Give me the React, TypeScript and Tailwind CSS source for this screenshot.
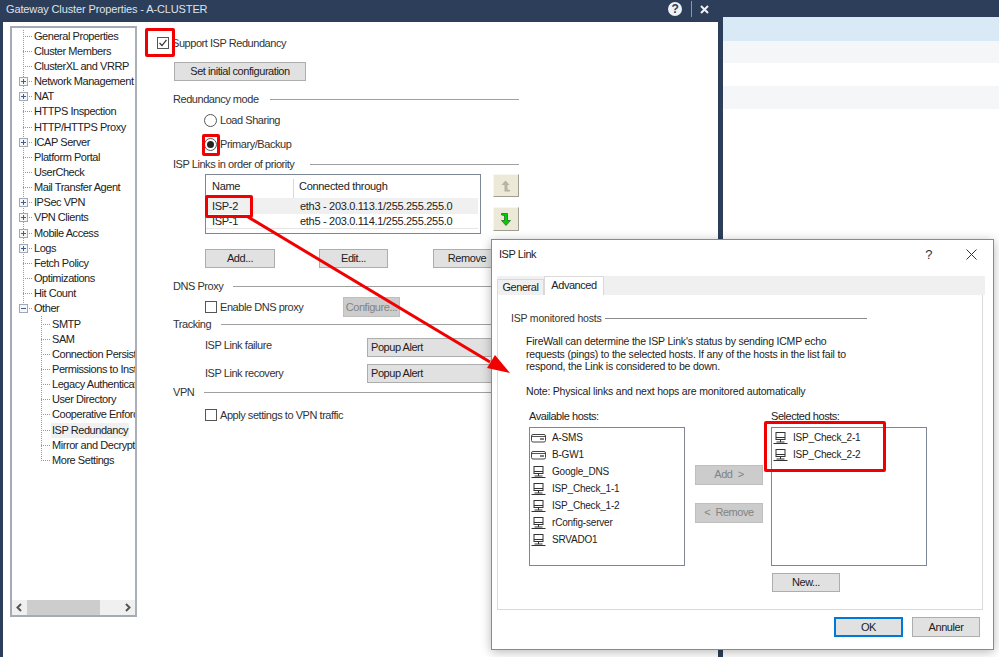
import React from "react";

const treeRows: [string, number, "" | "+" | "-"][] = [
  ["General Properties", 0, ""], ["Cluster Members", 0, ""], ["ClusterXL and VRRP", 0, ""],
  ["Network Management", 0, "+"], ["NAT", 0, "+"], ["HTTPS Inspection", 0, ""],
  ["HTTP/HTTPS Proxy", 0, ""], ["ICAP Server", 0, "+"], ["Platform Portal", 0, ""],
  ["UserCheck", 0, ""], ["Mail Transfer Agent", 0, ""], ["IPSec VPN", 0, "+"],
  ["VPN Clients", 0, "+"], ["Mobile Access", 0, "+"], ["Logs", 0, "+"],
  ["Fetch Policy", 0, ""], ["Optimizations", 0, ""], ["Hit Count", 0, ""], ["Other", 0, "-"],
  ["SMTP", 1, ""], ["SAM", 1, ""], ["Connection Persistence", 1, ""], ["Permissions to Install", 1, ""],
  ["Legacy Authentication", 1, ""], ["User Directory", 1, ""], ["Cooperative Enforcement", 1, ""],
  ["ISP Redundancy", 1, ""], ["Mirror and Decrypt", 1, ""], ["More Settings", 1, ""],
];

function Expander({ kind }: { kind: "+" | "-" }) {
  return (
    <svg width="9" height="9" viewBox="0 0 9 9" className="absolute left-[-4px] top-[3px] bg-[#f4f6f8]">
      <rect x="0.5" y="0.5" width="8" height="8" fill="none" stroke="#a2a9b3" />
      <path d={kind === "+" ? "M2 4.5H7M4.5 2V7" : "M2 4.5H7"} stroke="#3d5f96" fill="none" />
    </svg>
  );
}

function TreeRow({ label, level, exp }: { label: string; level: number; exp: "" | "+" | "-" }) {
  const selected = label === "ISP Redundancy";
  return (
    <div className={`relative h-[15.17px] flex items-center whitespace-nowrap ${level === 0 ? "ml-[23px]" : "ml-[41px]"}`}>
      <span className="w-[9px] shrink-0 border-t border-dotted border-[#9a9a9a]" />
      {exp && <Expander kind={exp} />}
      <span className={`${level === 0 ? "ml-[2px]" : "ml-[1px] pl-[1px] pr-[1px]"} ${selected ? "bg-[#f0f0f0] w-[80px] py-[2px]" : ""}`}>{label}</span>
    </div>
  );
}

function Tree() {
  return (
    <div className="relative mt-1 ml-[7px] w-[127px] h-[591px] shrink-0 border-2 border-[#a4abb5] border-r-[#aab0ba] bg-white text-[#222] overflow-hidden flex flex-col">
      <div className="relative pt-[0.5px] flex-1 overflow-hidden">
        <span className="absolute left-[11px] top-[2px] h-[279px] border-l border-dotted border-[#9a9a9a]" />
        <span className="absolute left-[29px] top-[288px] h-[145px] border-l border-dotted border-[#9a9a9a]" />
        <div className="relative -translate-x-[12px]">
          {treeRows.map(([l, lv, e]) => <TreeRow key={l} label={l} level={lv} exp={e} />)}
        </div>
      </div>
      <div className="h-[15px] flex items-center bg-[#f0f0f0]">
        <svg width="15" height="15" viewBox="0 0 15 15" className="shrink-0"><path d="M9 4L5.5 7.5L9 11" fill="none" stroke="#555" strokeWidth="2" /></svg>
        <div className="w-[73px] h-[15px] bg-[#cdcdcd]" />
        <div className="flex-1" />
        <svg width="15" height="15" viewBox="0 0 15 15" className="shrink-0"><path d="M6 4L9.5 7.5L6 11" fill="none" stroke="#555" strokeWidth="2" /></svg>
      </div>
    </div>
  );
}

function Btn({ children, cls = "", disabled = false }: { children?: React.ReactNode; cls?: string; disabled?: boolean }) {
  return (
    <div className={`flex items-center justify-center border shrink-0 ${disabled ? "bg-[#cccccc] border-[#bfbfbf] text-[#838383]" : "bg-[#e1e1e1] border-[#adadad] text-[#222]"} ${cls}`}>{children}</div>
  );
}

function Header({ text, cls = "", gap = "gap-[10px]" }: { text: string; cls?: string; gap?: string }) {
  return (
    <div className={`flex items-center h-[14px] text-[#333] ${gap} ${cls}`}>
      <span className="whitespace-nowrap">{text}</span>
      <span className="flex-1 border-t border-[#a0a0a0]" />
    </div>
  );
}

function Check({ checked = false }: { checked?: boolean }) {
  return (
    <svg width="12" height="12" viewBox="0 0 12 12" className="shrink-0">
      <rect x="0.5" y="0.5" width="11" height="11" fill="#fff" stroke="#555" />
      {checked && <path d="M2.5 6L5 8.5L9.5 2.8" fill="none" stroke="#333" strokeWidth="1.2" />}
    </svg>
  );
}

function Radio({ on = false }: { on?: boolean }) {
  return (
    <svg width="13" height="13" viewBox="0 0 13 13" className="shrink-0">
      <circle cx="6.5" cy="6.5" r="6" fill="#fff" stroke="#555" />
      {on && <circle cx="6.5" cy="6.5" r="3.5" fill="#222" />}
    </svg>
  );
}

function ArrowBtn({ dir }: { dir: "up" | "down" }) {
  return (
    <div className={`w-[26px] flex items-center justify-center bg-[#ece9d8] border border-r-[#9d9d92] border-b-[#9d9d92] border-t-[#f7f6ef] border-l-[#f7f6ef] ${dir === "up" ? "h-[23px]" : "h-[24px]"}`}>
      {dir === "up" ? (
        <svg width="10" height="12" viewBox="0 0 10 12"><path d="M4.5 0.5L8.5 5H6.5V9.5L9 10V11.5H3.5V5H0.5Z" fill="#b5b3a2" /></svg>
      ) : (
        <svg width="10" height="13" viewBox="0 0 10 13"><path d="M0.5 0.5H6.5V7.5H9.5L5 12.5L0.5 7.5H3.5V2.5L0.5 2Z" fill="#00d000" stroke="#235a23" strokeWidth="0.7" /></svg>
      )}
    </div>
  );
}

function SelectBox({ cls = "" }: { cls?: string }) {
  return (
    <div className={`w-[150px] h-[19px] bg-[#e1e1e1] border border-[#adadad] flex items-center pl-[3px] shrink-0 text-[#222] ${cls}`}>Popup Alert</div>
  );
}

function Form() {
  return (
    <div className="ml-[36px] w-[346px] flex flex-col text-[#333]">
      <div className="mt-[14px] -ml-[16px] h-[14px] flex items-center gap-[3px]"><Check checked /><span>Support ISP Redundancy</span></div>
      <Btn cls="mt-[12px] ml-[1px] w-[132px] h-[19px]">Set initial configuration</Btn>
      <Header text="Redundancy mode" cls="mt-[11px]" gap="gap-[11px]" />
      <div className="mt-[7px] ml-[31px] h-[14px] flex items-center gap-[3px]"><Radio /><span>Load Sharing</span></div>
      <div className="mt-[10px] ml-[31px] h-[14px] flex items-center gap-[3px]"><Radio on /><span>Primary/Backup</span></div>
      <Header text="ISP Links in order of priority" cls="mt-[6px]" gap="gap-[16px]" />
      <div className="mt-[3px] ml-[32px] flex gap-[12px] items-start">
        <div className="w-[277px] h-[60px] border border-[#7d8694] flex flex-col text-[#222] pt-[4px] tracking-[-0.3px]">
          <div className="h-[19px] flex items-start"><span className="w-[88px] pl-[6px] border-r border-[#d9d9d9] h-[19px] pt-[2px]">Name</span><span className="pl-[5px] pt-[2px]">Connected through</span></div>
          <div className="h-[16px] flex items-center bg-[#f0f0f0] mr-[2px]"><span className="w-[88px] pl-[6px]">ISP-2</span><span className="pl-[6px]">eth3 - 203.0.113.1/255.255.255.0</span></div>
          <div className="h-[15px] flex items-center border-b border-[#e5e5e5] mr-[2px]"><span className="w-[88px] pl-[6px]">ISP-1</span><span className="pl-[6px]">eth5 - 203.0.114.1/255.255.255.0</span></div>
        </div>
        <div className="flex flex-col gap-[10px]"><ArrowBtn dir="up" /><ArrowBtn dir="down" /></div>
      </div>
      <div className="mt-[15px] ml-[32px] flex h-[19px]">
        <Btn cls="w-[70px] h-[19px]">Add...</Btn>
        <Btn cls="ml-[44px] w-[69px] h-[19px]">Edit...</Btn>
        <Btn cls="ml-[45px] w-[68px] h-[19px]">Remove</Btn>
      </div>
      <Header text="DNS Proxy" cls="mt-[11px]" />
      <div className="mt-[4px] ml-[32px] h-[20px] flex items-center">
        <div className="w-[138px] flex items-center gap-[3px]"><Check /><span>Enable DNS proxy</span></div>
        <Btn disabled cls="w-[57px] h-[20px]">Configure...</Btn>
      </div>
      <Header text="Tracking" />
      <div className="mt-[7px] ml-[32px] flex"><span className="w-[162px] h-[14px] leading-[14px]">ISP Link failure</span><SelectBox /></div>
      <div className="mt-[7px] ml-[32px] flex items-center"><span className="w-[162px]">ISP Link recovery</span><SelectBox /></div>
      <Header text="VPN" cls="mt-[2px]" />
      <div className="mt-[9px] ml-[32px] h-[14px] flex items-center gap-[3px]"><Check /><span>Apply settings to VPN traffic</span></div>
    </div>
  );
}

function Computer() {
  return (
    <svg width="15" height="14" viewBox="0 0 15 14" className="shrink-0">
      <rect x="3" y="1.5" width="9" height="7" fill="#fff" stroke="#333" />
      <path d="M3 6.5H12M7.5 8.5V11M3.5 11H11.5M0.5 12.5H14.5" fill="none" stroke="#333" />
    </svg>
  );
}

function Server() {
  return (
    <svg width="15" height="14" viewBox="0 0 15 14" className="shrink-0">
      <rect x="0.5" y="3.5" width="14" height="7.5" rx="1.5" fill="#fff" stroke="#444" />
      <path d="M1 5.5H14" stroke="#555" />
      <path d="M9 8H13" stroke="#555" strokeWidth="1.5" />
    </svg>
  );
}

function Host({ name, server = false, gap = "gap-[6px]" }: { name: string; server?: boolean; gap?: string }) {
  return (
    <div className={`h-[17px] flex items-center text-[10px] tracking-[-0.2px] ${gap}`}>
      {server ? <Server /> : <Computer />}
      <span>{name}</span>
    </div>
  );
}

function IspDialog() {
  return (
    <div className="absolute left-[491px] top-[239px] w-[503px] h-[411px] bg-white border border-[#8a8a8a] shadow-[0_2px_10px_rgba(0,0,0,0.28)] flex flex-col text-[#222]">
      <div className="h-[36px] flex items-center pl-[7px] pr-[16px] pb-[8px] shrink-0">
        <span>ISP Link</span>
        <span className="ml-auto mr-[34px] text-[#333] text-[13px]">?</span>
        <svg width="11" height="11" viewBox="0 0 11 11"><path d="M0.5 0.5L10.5 10.5M10.5 0.5L0.5 10.5" stroke="#333" fill="none" /></svg>
      </div>
      <div className="ml-[5px] h-[19px] bg-[#f0f0f0] flex items-end shrink-0 w-[488px]">
        <div className="w-[47px] h-[16px] border border-b-0 border-[#d9d9d9] flex items-center justify-center">General</div>
        <div className="w-[60px] h-[19px] bg-white border border-b-0 border-[#d9d9d9] flex items-center justify-center pb-[2px]">Advanced</div>
      </div>
      <div className="ml-[5px] w-[486px] h-[315px] border border-t-0 border-[#d9d9d9] flex flex-col pt-[16px] relative">
        <div className="ml-[13px] w-[356px] h-[14px] flex items-center text-[10.5px] tracking-[-0.2px]"><span className="whitespace-nowrap text-[#333] w-[94px]">ISP monitored hosts</span><span className="flex-1 border-t border-[#8a8a8a]" /></div>
        <div className="ml-[28px] mt-[10px] leading-[12.5px] whitespace-nowrap text-[10.5px] tracking-[-0.2px]">
          <p>FireWall can determine the ISP Link's status by sending ICMP echo</p>
          <p>requests (pings) to the selected hosts. If any of the hosts in the list fail to</p>
          <p>respond, the Link is considered to be down.</p>
          <p className="mt-[12.5px]">Note: Physical links and next hops are monitored automatically</p>
        </div>
        <div className="ml-[31px] mt-[12px] flex">
          <div className="w-[156px] shrink-0">
            <div className="h-[14px] flex items-center">Available hosts:</div>
            <div className="mt-[3px] h-[139px] border border-[#7d8694] pl-[1px] pt-[2px]">
              <Host name="A-SMS" server />
              <Host name="B-GW1" server />
              <Host name="Google_DNS" />
              <Host name="ISP_Check_1-1" />
              <Host name="ISP_Check_1-2" />
              <Host name="rConfig-server" />
              <Host name="SRVADO1" />
            </div>
          </div>
          <div className="ml-[10px] w-[68px] pt-[55px] shrink-0 flex flex-col gap-[18px]">
            <Btn disabled cls="h-[20px] w-[68px]">Add&nbsp;&nbsp;&gt;</Btn>
            <Btn disabled cls="h-[20px] w-[68px]">&lt;&nbsp;&nbsp;Remove</Btn>
          </div>
          <div className="ml-[8px] w-[156px] shrink-0">
            <div className="h-[14px] flex items-center">Selected hosts:</div>
            <div className="mt-[3px] h-[139px] border border-[#7d8694] pl-[1px] pt-[2px]">
              <Host name="ISP_Check_2-1" gap="gap-[5px]" />
              <Host name="ISP_Check_2-2" gap="gap-[5px]" />
            </div>
            <Btn cls="mt-[7px] ml-[1px] w-[68px] h-[19px]">New...</Btn>
          </div>
        </div>
      </div>
      <div className="flex justify-end gap-[9px] pr-[13px] pt-[7px]">
        <Btn cls="w-[69px] h-[20px] border-2 !border-[#0078d7]">OK</Btn>
        <Btn cls="w-[68px] h-[20px]">Annuler</Btn>
      </div>
    </div>
  );
}

function Annotations() {
  const box = "absolute border-[3px] border-[#f00000] rounded-[2px]";
  return (
    <>
      <div className={`${box} left-[145px] top-[28px] w-[30px] h-[29px]`} />
      <div className={`${box} left-[202px] top-[134px] w-[18px] h-[22px]`} />
      <div className={`${box} left-[205px] top-[195px] w-[48px] h-[23px]`} />
      <div className={`${box} left-[764px] top-[421px] w-[122px] h-[51px]`} />
      <svg className="absolute left-0 top-0 pointer-events-none" width="999" height="657" viewBox="0 0 999 657">
        <path d="M248 217L490 362" stroke="#f00000" strokeWidth="3" fill="none" />
        <path d="M510 373L487 368L495 355Z" fill="#f00000" />
      </svg>
    </>
  );
}

export default function App() {
  return (
    <div className="relative w-[999px] h-[657px] overflow-hidden bg-[#2c3e5a] flex text-[11px] font-['Liberation_Sans',sans-serif] tracking-[-0.45px] leading-none">
      <div className="w-[718px] h-full flex flex-col shrink-0">
        <div className="h-[22px] shrink-0 flex items-center pl-[6px] text-[#dfe3ea] text-[11px] tracking-[-0.12px]">
          <span className="-mt-[4px]">Gateway Cluster Properties - A-CLUSTER</span>
          <span className="ml-auto -mt-[4px] w-[14px] h-[14px] rounded-full bg-[#eef1f6] text-[#2c3e5a] font-bold text-[12px] flex items-center justify-center">?</span>
          <span className="ml-[9px] -mt-[4px] h-[16px] border-l border-[#8b98ab]" />
          <svg className="ml-[8px] mr-[9px] -mt-[4px]" width="9" height="9" viewBox="0 0 9 9"><path d="M1 1L8 8M8 1L1 8" stroke="#eef1f6" strokeWidth="2" fill="none" /></svg>
        </div>
        <div className="flex-1 ml-[3px] bg-white flex">
          <Tree />
          <Form />
        </div>
      </div>
      <div className="ml-[5px] flex-1 mt-[17px] bg-white flex flex-col">
        <div className="h-[24px] bg-[#d9e9f6]" />
        <div className="h-[22px] bg-[#f5f6f8]" />
        <div className="h-[23px] bg-white" />
        <div className="h-[23px] bg-[#f5f6f8]" />
      </div>
      <IspDialog />
      <Annotations />
    </div>
  );
}
